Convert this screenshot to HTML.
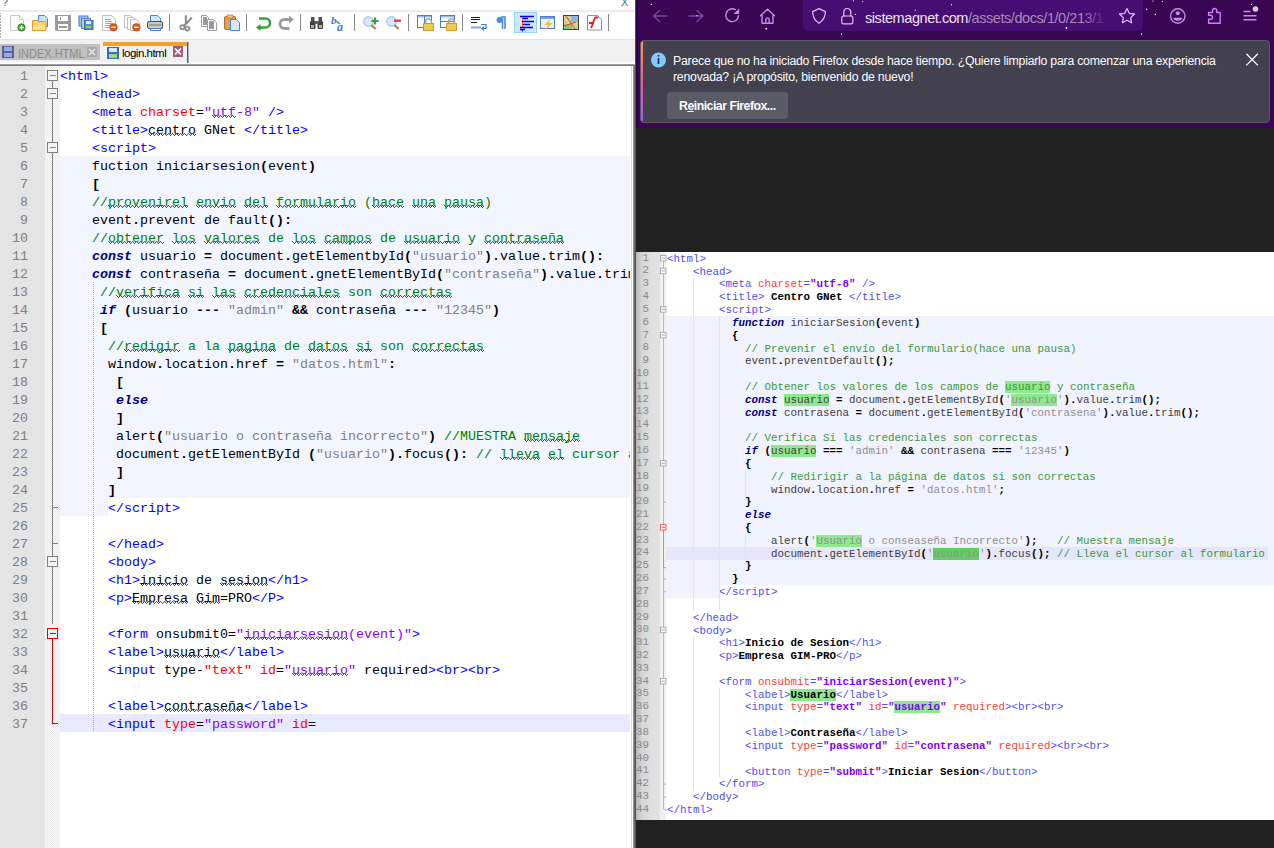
<!DOCTYPE html>
<html><head><meta charset="utf-8">
<style>
*{box-sizing:border-box}
html,body{margin:0;padding:0}
body{width:1274px;height:848px;overflow:hidden;position:relative;background:#fff;font-family:"Liberation Sans",sans-serif}
.abs{position:absolute}
/* left editor */
#npp{position:absolute;left:0;top:0;width:636px;height:848px;background:#fff;overflow:hidden}
#ed{position:absolute;left:0;top:66px;width:630px;height:782px;overflow:hidden}
#lnm{position:absolute;left:0;top:0;width:45px;height:100%;background:#e4e4e4}
#fm{position:absolute;left:45px;top:0;width:15px;height:100%;background:repeating-conic-gradient(#e8e8e8 0 25%,#fbfbfb 0 50%) 0 0/2px 2px}
.nn{position:absolute;left:0;margin-top:2px;width:28px;height:18px;line-height:18px;text-align:right;font:13.333px/18px "Liberation Mono",monospace;color:#808080}
#code{position:absolute;left:60px;top:0;width:570px;height:100%;overflow:hidden}
.ln{position:absolute;left:0;margin-top:2px;height:18px;line-height:18px;white-space:pre;font-family:"Liberation Mono",monospace;font-size:13.333px;color:#000}
.ln .t{color:#0000ff} .ln .a{color:#ff0000} .ln .v{color:#8000ff} .ln .k{color:#000080;font-weight:bold;font-style:italic}
.ln .s{color:#808080} .ln .c{color:#008000} .ln .o{font-weight:bold}
/* right code */
#img{position:absolute;left:0px;top:252px;width:638px;height:568px;background:#fff;overflow:hidden}
#rg{position:absolute;left:0;top:0;width:24px;height:100%;background:linear-gradient(90deg,#b8b8b8 0,#d6d6d6 6px,#e0e0e0 16px,#e2e2e2 24px)}
#rf{position:absolute;left:24px;top:0;width:6px;height:100%;background:#f0f0f0}
.rn{position:absolute;left:0;margin-top:-0.4px;width:13px;height:12.82px;line-height:12.82px;text-align:right;font-family:"Liberation Mono",monospace;font-size:10.833px;color:#8a8a8a;white-space:pre}
#rcode{position:absolute;left:31px;top:0;width:607px;height:100%}
.rl{position:absolute;left:0;margin-top:0.8px;height:12.82px;line-height:12.82px;white-space:pre;font-family:"Liberation Mono",monospace;font-size:10.833px;color:#404040}
.rl .t{color:#4d4df5} .rl .a{color:#ff3a3a} .rl .v{color:#8000ff;font-weight:bold} .rl .k{color:#000080;font-weight:bold;font-style:italic}
.rl .s{color:#909090} .rl .c{color:#3a9a3a} .rl .o{font-weight:bold;color:#000} .rl .x{font-weight:bold;color:#000}
.rl .g{background:#8ee88e} .rl .G{background:#60d060}
/* firefox */
#ff{position:absolute;left:636px;top:0;width:638px;height:848px;background:#212121}
#tb{position:absolute;left:0;top:0;width:638px;height:128px;background:#390653}
#note{position:absolute;left:4px;top:40px;width:630px;height:83px;background:#42414d;border:1px solid #5b5a64;border-radius:4px;overflow:hidden}
.ntxt{position:absolute;left:32px;color:#fbfbfe;font-size:12.3px;letter-spacing:-0.24px;white-space:nowrap}
</style></head><body>
<div id="npp">
  <div class="abs" style="left:0;top:10px;width:634px;height:2px;background:#ececec"></div><div class="abs" style="left:635px;top:0;width:1px;height:66px;background:#2e5a55"></div>
  <div class="abs" style="left:0;top:39px;width:635px;height:1px;background:#e3e3e3"></div>
  <div class="abs" style="left:0;top:40px;width:635px;height:22px;background:#f0f0f0"></div>
  <div class="abs" style="left:0;top:62px;width:635px;height:2px;background:#fff"></div><div class="abs" style="left:0;top:63.5px;width:635px;height:2.5px;background:linear-gradient(#b0b0b0,#6a6a6a)"></div>
  <svg class="abs" style="left:0;top:0" width="636" height="40">
<text x="2" y="6" font-family="Liberation Sans" font-size="11" fill="#4a4a90">?</text>
<text x="621" y="6" font-family="Liberation Sans" font-size="11" fill="#5a6aa0">X</text>
<rect x="0" y="13" width="1" height="25" fill="url(#tbgrip)"/>
<defs><pattern id="tbgrip" width="1" height="3" patternUnits="userSpaceOnUse"><rect width="1" height="2" fill="#b0b0b0"/></pattern></defs>
<!-- separators -->
<rect x="169" y="14" width="1" height="17" fill="#8a8a8a"/>
<rect x="246" y="14" width="1" height="17" fill="#8a8a8a"/>
<rect x="300" y="14" width="1" height="17" fill="#8a8a8a"/>
<rect x="354" y="14" width="1" height="17" fill="#8a8a8a"/>
<rect x="408" y="14" width="1" height="17" fill="#8a8a8a"/>
<rect x="462" y="14" width="1" height="17" fill="#8a8a8a"/>
<rect x="608" y="14" width="1" height="17" fill="#8a8a8a"/>
<!-- 1 new -->
<path d="M10.5 15.5h9l4 4v11h-13z" fill="#fdfdfd" stroke="#c8c8c8"/>
<path d="M19.5 15.5v4h4" fill="none" stroke="#c8c8c8"/>
<circle cx="21.5" cy="27.5" r="3.7" fill="#3f9a2e" stroke="#2a6e1e" stroke-width=".6"/>
<path d="M21.5 25.3v4.4M19.3 27.5h4.4" stroke="#fff" stroke-width="1.3"/>
<!-- 2 open -->
<path d="M38.5 15.5h6l3 3v8.5h-9z" fill="#cfe2fb" stroke="#4a86d8"/>
<path d="M32.5 20.5h5l1 1h7.5v9h-13.5z" fill="#f7d36a" stroke="#e89a2a"/>
<rect x="33" y="25" width="12" height="5" fill="#f9e08a"/>
<!-- 3 save grey -->
<path d="M55 15h16v16h-15l-1-1z" fill="#9a9a9a"/>
<rect x="58" y="16" width="10" height="5" fill="#fff"/><rect x="60" y="17" width="1" height="3" fill="#8a8a8a"/>
<rect x="58" y="24" width="10" height="6" fill="#fff"/><rect x="59" y="26" width="8" height="2" fill="#999"/>
<!-- 4 save all -->
<rect x="79" y="16" width="9" height="10" fill="#a8c4ee" stroke="#4a7ac8" stroke-width="1"/>
<rect x="81.5" y="18.5" width="9" height="10" fill="#b8d0f2" stroke="#4a7ac8"/>
<rect x="84.5" y="20.5" width="8.5" height="9" fill="#5b8fd8" stroke="#3a6ab8"/>
<rect x="86" y="21" width="5" height="3" fill="#eef4ff"/><rect x="86" y="26" width="5" height="2" fill="#8ad84a"/>
<!-- 5 close -->
<path d="M102.5 15.5h9l4 4v11h-13z" fill="#fdfdfd" stroke="#c0c0c0"/>
<path d="M105 19.5h6M105 21.5h7M105 23.5h7M105 25.5h5M105 27.5h4" stroke="#a8a8a8" stroke-width="1"/>
<circle cx="113.5" cy="27.3" r="3.8" fill="#e25a14" stroke="#b8400a" stroke-width=".6"/>
<rect x="111.3" y="26.6" width="4.4" height="1.4" fill="#fff"/>
<!-- 6 close all -->
<path d="M124.5 15.5h6l3 3v9h-9z" fill="#fdfdfd" stroke="#c0c0c0"/>
<path d="M127.5 17.5h6l3 3v9h-9z" fill="#fdfdfd" stroke="#c0c0c0"/>
<path d="M130.5 19.5h6l3 3v8h-9z" fill="#fdfdfd" stroke="#c0c0c0"/>
<circle cx="136.4" cy="27.3" r="3.8" fill="#e25a14" stroke="#b8400a" stroke-width=".6"/>
<rect x="134.2" y="26.6" width="4.4" height="1.4" fill="#fff"/>
<!-- 7 print -->
<path d="M150.5 15.5h7l3 3v4h-10z" fill="#d4e6fb" stroke="#4a86d8"/>
<rect x="147.5" y="21.5" width="15" height="7" rx="1.5" fill="#c8c8c8" stroke="#505050"/>
<rect x="149" y="24" width="12" height="2" fill="#a0a0a0"/>
<rect x="150.5" y="28.5" width="10" height="2" fill="#e6f0fc" stroke="#4a86d8"/>
<!-- 8 cut -->
<path d="M185.8 15.2V24.5M191.8 17.5L184.5 25.5" stroke="#8a8a8a" stroke-width="2" fill="none"/>
<circle cx="182.4" cy="27.2" r="2.1" fill="none" stroke="#8a8a8a" stroke-width="1.7"/>
<circle cx="187.4" cy="28.6" r="2.1" fill="none" stroke="#8a8a8a" stroke-width="1.7"/>
<!-- 9 copy -->
<path d="M201.5 15.5h5l2 2v9h-7z" fill="#fff" stroke="#9a9a9a"/><rect x="203" y="17" width="4" height="8" fill="#9a9a9a"/>
<path d="M207.5 19.5h6l3 3v8h-9z" fill="#fff" stroke="#9a9a9a"/><rect x="209" y="21" width="5" height="8" fill="#9a9a9a"/>
<!-- 10 paste -->
<rect x="224.5" y="16.5" width="11" height="13" rx="1" fill="#e0a050" stroke="#b07028"/>
<rect x="227" y="15" width="6" height="3" fill="#f0c070" stroke="#b07028" stroke-width=".6"/>
<path d="M230.5 19.5h6l3 3v8h-9z" fill="#d8e8fc" stroke="#4a86d8"/>
<!-- 11 undo -->
<path d="M259 18.5h6.5a4.5 4.5 0 0 1 0 9h-6" fill="none" stroke="#3aa03a" stroke-width="2.6"/>
<path d="M256 27.5l4.5-3.5v7z" fill="#3aa03a"/>
<!-- 12 redo -->
<path d="M291 19.5h-6.5a4.5 4.5 0 0 0 0 9h5" fill="none" stroke="#9a9a9a" stroke-width="2.8"/>
<path d="M294 19.5l-5 -4v8z" fill="#9a9a9a"/>
<!-- 13 find -->
<rect x="310" y="21" width="5.5" height="8" rx="1" fill="#404040"/><rect x="317.5" y="21" width="5.5" height="8" rx="1" fill="#404040"/>
<rect x="311" y="17" width="3.5" height="5" fill="#505050"/><rect x="318.5" y="17" width="3.5" height="5" fill="#505050"/>
<rect x="314.5" y="21" width="4" height="3" fill="#606060"/>
<rect x="311" y="25" width="3" height="3" fill="#b0b0b0"/><rect x="319" y="25" width="3" height="3" fill="#b0b0b0"/>
<!-- 14 replace -->
<text x="331" y="24" font-family="Liberation Serif" font-style="italic" font-weight="bold" font-size="11" fill="#3a7ad8">b</text>
<text x="337" y="31" font-family="Liberation Serif" font-style="italic" font-weight="bold" font-size="12" fill="#3a7ad8">a</text>
<path d="M336 21l4 3" stroke="#3a9a3a" stroke-width="1.5"/>
<!-- 15 zoom in -->
<circle cx="368.5" cy="21.5" r="4.8" fill="#d6e8fb" stroke="#8ab6e8" stroke-width="1"/>
<path d="M371.5 25l4 4" stroke="#b07a3a" stroke-width="2"/>
<path d="M375 17.5v7M371.5 21h7" stroke="#3a9a3a" stroke-width="2.2"/>
<!-- 16 zoom out -->
<circle cx="391.5" cy="21.5" r="4.8" fill="#d6e8fb" stroke="#8ab6e8" stroke-width="1"/>
<path d="M394.5 25l4 4" stroke="#b07a3a" stroke-width="2"/>
<rect x="394" y="19.5" width="7" height="2.4" fill="#e83a3a"/>
<!-- 17 sync v -->
<rect x="417.5" y="15.5" width="14" height="12" fill="#fff" stroke="#4a7ac8"/><rect x="418" y="16" width="13" height="1.5" fill="#9ab8e8"/>
<path d="M424.5 16v11" stroke="#4a7ac8"/>
<path d="M425.5 24v-2a3 3 0 0 1 6 0v2" fill="none" stroke="#a0a0a0" stroke-width="1.4"/>
<rect x="423.5" y="23.5" width="10" height="7" fill="#f0c850" stroke="#c89a30"/>
<!-- 18 sync h -->
<rect x="440.5" y="15.5" width="14" height="12" fill="#fff" stroke="#4a7ac8"/><rect x="441" y="16" width="13" height="1.5" fill="#9ab8e8"/>
<path d="M441 21.5h13" stroke="#4a7ac8"/>
<path d="M448.5 24v-2a3 3 0 0 1 6 0v2" fill="none" stroke="#a0a0a0" stroke-width="1.4"/>
<rect x="446.5" y="23.5" width="10" height="7" fill="#f0c850" stroke="#c89a30"/>
<!-- 19 wrap -->
<path d="M471 17.5h9M471 19.5h9M471 22.5h6" stroke="#202020" stroke-width="1"/>
<path d="M471 27.5h10" stroke="#7aa8e0" stroke-width="2"/>
<path d="M481 24.5h5v4h-4" fill="none" stroke="#3a7ad8" stroke-width="1.2"/>
<path d="M481 28.5l3-2.5v5z" fill="#3a7ad8"/>
<!-- 20 pilcrow -->
<path d="M500.5 17h4.5v12M502.5 17v12" stroke="#4a8ae0" stroke-width="1.6" fill="none"/>
<circle cx="499.5" cy="20" r="3" fill="#4a8ae0"/>
<!-- 21 indent guide selected -->
<rect x="514.5" y="12.5" width="22" height="20" fill="#cce8ff" stroke="#99d1ff"/>
<path d="M520 16.5h14M522 18.5h6M522 21.5h12M522 24.5h8M520 27.5h13M520 29.5h5" stroke="#0000e0" stroke-width="1.4"/>
<path d="M522.5 18v9" stroke="#e02020" stroke-width="1" stroke-dasharray="1 1"/>
<rect x="522" y="30" width="1" height="1.5" fill="#0000e0"/>
<!-- 22 launch -->
<rect x="540.5" y="16.5" width="14" height="12" fill="#eaf2fc" stroke="#4a7ac8"/><rect x="541" y="17" width="13" height="2" fill="#7aa0d8"/>
<path d="M550 19l-6 6h4l-3 5l8-7h-4z" fill="#f0c040"/>
<!-- 23 doc map -->
<rect x="563.5" y="15.5" width="15" height="14" fill="#d8d090" stroke="#404040"/>
<rect x="571" y="16" width="7" height="6" fill="#8ab8e8"/><rect x="564" y="24" width="8" height="5" fill="#8ac870"/>
<path d="M566 16l9 13M564 26l12 -4" stroke="#e04040" stroke-width="1"/>
<!-- 24 function list -->
<path d="M587.5 15.5h10l4 4v10.5h-14z" fill="#fff" stroke="#909090"/>
<path d="M591 28c2-3 2-7 4-10c1-1 2-1 3 0M589 23h5" fill="none" stroke="#e02020" stroke-width="1.8"/>
</svg>
  <div class="abs" style="left:0;top:44px;width:100px;height:16px;background:#c0c0c0"></div>
<svg class="abs" style="left:0;top:40px" width="200" height="24">
 <rect x="2" y="6" width="12" height="12" fill="#6a5a9a"/><rect x="4" y="7" width="8" height="4" fill="#8ab0e0"/><rect x="4" y="13" width="8" height="4" fill="#8ab0e0"/>
 <rect x="87" y="7" width="10" height="10" fill="#a8a8a8"/><path d="M89 9l6 6M95 9l-6 6" stroke="#e6e6e6" stroke-width="1.6"/>
 <rect x="103" y="2" width="84" height="4" fill="#f6a030"/>
 <rect x="187" y="2" width="1.4" height="21" fill="#555"/>
 <rect x="107" y="7" width="12" height="12" fill="#3a6ac8"/><rect x="109" y="8" width="8" height="4" fill="#dde8fa"/><rect x="109" y="14" width="8" height="4" fill="#9ad870"/>
 <rect x="173" y="6" width="10" height="11" fill="#a05a7a"/><path d="M175 8.5l6 6M181 8.5l-6 6" stroke="#fff" stroke-width="1.7"/>
</svg>
<div class="abs" style="left:17.5px;top:46px;font-size:12.5px;line-height:16px;color:#8c8c8c;white-space:nowrap;transform:scaleX(0.88);transform-origin:0 0">INDEX.HTML</div>
<div class="abs" style="left:122px;top:45px;font-size:11.5px;letter-spacing:-0.5px;line-height:16px;color:#000;white-space:nowrap">login.html</div>

  <div id="ed">
    <div id="lnm"><div class="nn" style="top:0px">1</div><div class="nn" style="top:18px">2</div><div class="nn" style="top:36px">3</div><div class="nn" style="top:54px">4</div><div class="nn" style="top:72px">5</div><div class="nn" style="top:90px">6</div><div class="nn" style="top:108px">7</div><div class="nn" style="top:126px">8</div><div class="nn" style="top:144px">9</div><div class="nn" style="top:162px">10</div><div class="nn" style="top:180px">11</div><div class="nn" style="top:198px">12</div><div class="nn" style="top:216px">13</div><div class="nn" style="top:234px">14</div><div class="nn" style="top:252px">15</div><div class="nn" style="top:270px">16</div><div class="nn" style="top:288px">17</div><div class="nn" style="top:306px">18</div><div class="nn" style="top:324px">19</div><div class="nn" style="top:342px">20</div><div class="nn" style="top:360px">21</div><div class="nn" style="top:378px">22</div><div class="nn" style="top:396px">23</div><div class="nn" style="top:414px">24</div><div class="nn" style="top:432px">25</div><div class="nn" style="top:450px">26</div><div class="nn" style="top:468px">27</div><div class="nn" style="top:486px">28</div><div class="nn" style="top:504px">29</div><div class="nn" style="top:522px">30</div><div class="nn" style="top:540px">31</div><div class="nn" style="top:558px">32</div><div class="nn" style="top:576px">33</div><div class="nn" style="top:594px">34</div><div class="nn" style="top:612px">35</div><div class="nn" style="top:630px">36</div><div class="nn" style="top:648px">37</div></div>
    <div id="fm"></div>
    <div class="abs" style="left:60px;top:90px;width:570px;height:342px;background:#f2f4fe"></div>
    <div class="abs" style="left:60px;top:432px;width:48px;height:18px;background:#f2f4fe"></div>
    <div class="abs" style="left:60px;top:648px;width:570px;height:18px;background:#e8e8ff"></div>
    <div id="code"><div class="ln" style="top:0px"><span class="t">&lt;html&gt;</span></div>
<div class="ln" style="top:18px">    <span class="t">&lt;head&gt;</span></div>
<div class="ln" style="top:36px">    <span class="t">&lt;meta</span> <span class="a">charset</span>=<span class="v">&quot;</span><span class="v q">utf</span><span class="v">-8&quot;</span><span class="t"> /&gt;</span></div>
<div class="ln" style="top:54px">    <span class="t">&lt;title&gt;</span><span class="q">centro</span> GNet <span class="t">&lt;/title&gt;</span></div>
<div class="ln" style="top:72px">    <span class="t">&lt;script&gt;</span></div>
<div class="ln" style="top:90px">    fuction iniciarsesion<span class="o">(</span>event<span class="o">)</span></div>
<div class="ln" style="top:108px">    <span class="o">[</span></div>
<div class="ln" style="top:126px">    <span class="c">//</span><span class="c q">provenirel</span><span class="c"> </span><span class="c q">envio</span><span class="c"> </span><span class="c q">del</span><span class="c"> </span><span class="c q">formulario</span><span class="c"> (</span><span class="c q">hace</span><span class="c"> </span><span class="c q">una</span><span class="c"> </span><span class="c q">pausa</span><span class="c">)</span></div>
<div class="ln" style="top:144px">    event<span class="o">.</span>prevent de fault<span class="o">():</span></div>
<div class="ln" style="top:162px">    <span class="c">//</span><span class="c q">obtener</span><span class="c"> </span><span class="c q">los</span><span class="c"> </span><span class="c q">valores</span><span class="c"> de </span><span class="c q">los</span><span class="c"> </span><span class="c q">campos</span><span class="c"> de </span><span class="c q">usuario</span><span class="c"> y </span><span class="c q">contraseña</span></div>
<div class="ln" style="top:180px">    <span class="k">const</span> usuario <span class="o">=</span> document<span class="o">.</span>getElementbyId<span class="o">(</span><span class="s">&quot;usuario&quot;</span><span class="o">).</span>value<span class="o">.</span>trim<span class="o">():</span></div>
<div class="ln" style="top:198px">    <span class="k">const</span> contraseña <span class="o">=</span> document<span class="o">.</span>gnetElementById<span class="o">(</span><span class="s">&quot;contraseña&quot;</span><span class="o">).</span>value<span class="o">.</span>trim<span class="o">():</span></div>
<div class="ln" style="top:216px">     <span class="c">//</span><span class="c q">verifica</span><span class="c"> </span><span class="c q">si</span><span class="c"> </span><span class="c q">las</span><span class="c"> </span><span class="c q">credenciales</span><span class="c"> son </span><span class="c q">correctas</span></div>
<div class="ln" style="top:234px">     <span class="k">if</span> <span class="o">(</span>usuario <span class="o">---</span> <span class="s">&quot;admin&quot;</span> <span class="o">&amp;&amp;</span> contraseña <span class="o">---</span> <span class="s">&quot;12345&quot;</span><span class="o">)</span></div>
<div class="ln" style="top:252px">     <span class="o">[</span></div>
<div class="ln" style="top:270px">      <span class="c">//</span><span class="c q">redigir</span><span class="c"> a la </span><span class="c q">pagina</span><span class="c"> de </span><span class="c q">datos</span><span class="c"> </span><span class="c q">si</span><span class="c"> son </span><span class="c q">correctas</span></div>
<div class="ln" style="top:288px">      window<span class="o">.</span>location<span class="o">.</span>href <span class="o">=</span> <span class="s">&quot;datos.html&quot;</span><span class="o">:</span></div>
<div class="ln" style="top:306px">       <span class="o">[</span></div>
<div class="ln" style="top:324px">       <span class="k">else</span></div>
<div class="ln" style="top:342px">       <span class="o">]</span></div>
<div class="ln" style="top:360px">       alert<span class="o">(</span><span class="s">&quot;usuario o contraseña incorrecto&quot;</span><span class="o">)</span> <span class="c">//MUESTRA </span><span class="c q">mensaje</span></div>
<div class="ln" style="top:378px">       document<span class="o">.</span>getElementById <span class="o">(</span><span class="s">&quot;usuario&quot;</span><span class="o">).</span>focus<span class="o">():</span> <span class="c">// </span><span class="c q">lleva</span><span class="c"> </span><span class="c q">el</span><span class="c"> cursor al formulario</span></div>
<div class="ln" style="top:396px">       <span class="o">]</span></div>
<div class="ln" style="top:414px">      <span class="o">]</span></div>
<div class="ln" style="top:432px">      <span class="t">&lt;/script&gt;</span></div>
<div class="ln" style="top:450px"></div>
<div class="ln" style="top:468px">      <span class="t">&lt;/head&gt;</span></div>
<div class="ln" style="top:486px">      <span class="t">&lt;body&gt;</span></div>
<div class="ln" style="top:504px">      <span class="t">&lt;h1&gt;</span><span class="q">inicio</span> de <span class="q">sesion</span><span class="t">&lt;/h1&gt;</span></div>
<div class="ln" style="top:522px">      <span class="t">&lt;p&gt;</span><span class="q">Empresa</span> <span class="q">Gim</span>=PRO<span class="t">&lt;/P&gt;</span></div>
<div class="ln" style="top:540px"></div>
<div class="ln" style="top:558px">      <span class="t">&lt;form</span> onsubmit0=<span class="v">&quot;</span><span class="v q">iniciarsesion</span><span class="v">(event)&quot;</span><span class="t">&gt;</span></div>
<div class="ln" style="top:576px">      <span class="t">&lt;label&gt;</span><span class="q">usuario</span><span class="t">&lt;/label&gt;</span></div>
<div class="ln" style="top:594px">      <span class="t">&lt;input</span> type-<span class="a">&quot;text&quot;</span> <span class="a">id</span>=<span class="v">&quot;</span><span class="v q">usuario</span><span class="v">&quot;</span> required<span class="t">&gt;&lt;br&gt;&lt;br&gt;</span></div>
<div class="ln" style="top:612px"></div>
<div class="ln" style="top:630px">      <span class="t">&lt;label&gt;</span><span class="q">contraseña</span><span class="t">&lt;/label&gt;</span></div>
<div class="ln" style="top:648px">      <span class="t">&lt;input</span> <span class="a">type</span>=<span class="v">&quot;password&quot;</span> <span class="a">id</span>=</div>
</div>
  </div>
  <svg class="abs" style="left:0;top:0" width="636" height="848">
    <defs>
      <pattern id="zz" x="0" y="1" width="4" height="3" patternUnits="userSpaceOnUse">
        <rect x="0" y="0" width="1" height="1" fill="#ff0000"/><rect x="1" y="1" width="1" height="1" fill="#ff0000"/>
        <rect x="2" y="2" width="1" height="1" fill="#ff0000"/><rect x="3" y="1" width="1" height="1" fill="#ff0000"/>
      </pattern>
      <pattern id="dots" x="0" y="0" width="1" height="2" patternUnits="userSpaceOnUse"><rect x="0" y="0" width="1" height="1" fill="#a8a8a8"/></pattern>
    </defs>
    <rect x="52" y="80" width="1" height="544" fill="#808080"/><rect x="47.5" y="70.5" width="10" height="10" fill="#f4f4f4" stroke="#808080"/><rect x="50" y="75" width="6" height="1" fill="#808080"/><rect x="47.5" y="88.5" width="10" height="10" fill="#f4f4f4" stroke="#808080"/><rect x="50" y="93" width="6" height="1" fill="#808080"/><rect x="47.5" y="142.5" width="10" height="10" fill="#f4f4f4" stroke="#808080"/><rect x="50" y="147" width="6" height="1" fill="#808080"/><rect x="47.5" y="556.5" width="10" height="10" fill="#f4f4f4" stroke="#808080"/><rect x="50" y="561" width="6" height="1" fill="#808080"/><rect x="53" y="507" width="5" height="1" fill="#808080"/><rect x="53" y="543" width="5" height="1" fill="#808080"/><rect x="52" y="638" width="1" height="86" fill="#e00000"/><rect x="52" y="723" width="6" height="1" fill="#e00000"/><rect x="47.5" y="628.5" width="10" height="10" fill="#fff4f4" stroke="#e00000"/><rect x="50" y="633" width="6" height="1" fill="#e00000"/><rect x="93" y="282" width="1" height="450" fill="url(#dots)"/><rect x="212" y="115" width="24" height="3" fill="url(#zz)"/><rect x="148" y="133" width="48" height="3" fill="url(#zz)"/><rect x="108" y="205" width="80" height="3" fill="url(#zz)"/><rect x="196" y="205" width="40" height="3" fill="url(#zz)"/><rect x="244" y="205" width="24" height="3" fill="url(#zz)"/><rect x="276" y="205" width="80" height="3" fill="url(#zz)"/><rect x="372" y="205" width="32" height="3" fill="url(#zz)"/><rect x="412" y="205" width="24" height="3" fill="url(#zz)"/><rect x="444" y="205" width="40" height="3" fill="url(#zz)"/><rect x="108" y="241" width="56" height="3" fill="url(#zz)"/><rect x="172" y="241" width="24" height="3" fill="url(#zz)"/><rect x="204" y="241" width="56" height="3" fill="url(#zz)"/><rect x="292" y="241" width="24" height="3" fill="url(#zz)"/><rect x="324" y="241" width="48" height="3" fill="url(#zz)"/><rect x="404" y="241" width="56" height="3" fill="url(#zz)"/><rect x="484" y="241" width="80" height="3" fill="url(#zz)"/><rect x="116" y="295" width="64" height="3" fill="url(#zz)"/><rect x="188" y="295" width="16" height="3" fill="url(#zz)"/><rect x="212" y="295" width="24" height="3" fill="url(#zz)"/><rect x="244" y="295" width="96" height="3" fill="url(#zz)"/><rect x="380" y="295" width="72" height="3" fill="url(#zz)"/><rect x="124" y="349" width="56" height="3" fill="url(#zz)"/><rect x="228" y="349" width="48" height="3" fill="url(#zz)"/><rect x="308" y="349" width="40" height="3" fill="url(#zz)"/><rect x="356" y="349" width="16" height="3" fill="url(#zz)"/><rect x="412" y="349" width="72" height="3" fill="url(#zz)"/><rect x="524" y="439" width="56" height="3" fill="url(#zz)"/><rect x="500" y="457" width="40" height="3" fill="url(#zz)"/><rect x="548" y="457" width="16" height="3" fill="url(#zz)"/><rect x="140" y="583" width="48" height="3" fill="url(#zz)"/><rect x="220" y="583" width="48" height="3" fill="url(#zz)"/><rect x="132" y="601" width="56" height="3" fill="url(#zz)"/><rect x="196" y="601" width="24" height="3" fill="url(#zz)"/><rect x="244" y="637" width="104" height="3" fill="url(#zz)"/><rect x="164" y="655" width="56" height="3" fill="url(#zz)"/><rect x="292" y="673" width="56" height="3" fill="url(#zz)"/><rect x="164" y="709" width="80" height="3" fill="url(#zz)"/>
  </svg>
  <div class="abs" style="left:630px;top:66px;width:1px;height:782px;background:#fff"></div>
  <div class="abs" style="left:631px;top:66px;width:1px;height:782px;background:#d9d9d9"></div>
  <div class="abs" style="left:632px;top:66px;width:1px;height:782px;background:#fff"></div>
  <div class="abs" style="left:633px;top:66px;width:3px;height:782px;background:linear-gradient(90deg,#a8a8a8,#6a6a6a,#34504a)"></div>
</div>
<div id="ff">
  <div id="tb">
    <div class="abs" style="left:0;top:0;width:2px;height:128px;background:#2e0446"></div><div class="abs" style="left:167px;top:0;width:340px;height:31px;background:#460e72;border-radius:0 0 5px 5px"></div>
<svg class="abs" style="left:0;top:0" width="638" height="40">
 <g fill="none" stroke-width="1.5" stroke-linecap="round" stroke-linejoin="round">
  <path d="M17.5 16h13.5M23.5 10.5l-6 5.5 6 5.5" stroke="#7a48a2" stroke-width="1.4"/>
  <path d="M53 16h13.5M61 10.5l6 5.5-6 5.5" stroke="#7a48a2" stroke-width="1.4"/>
  <path d="M99.3 9.6A6.4 6.4 0 1 0 102.6 15.6" stroke="#c98af0" stroke-width="1.4"/>
  <path d="M103.2 8.4V14H97.6z" fill="#c98af0" stroke="none"/>
  <path d="M124.5 15.8L131.5 9.2L138.5 15.8M126 14.5V23.3H137V14.5M129.8 23V19.6a1.7 1.7 0 0 1 3.4 0V23" stroke="#c98af0" stroke-width="1.4"/>
  <path d="M183 8.6L176.6 11.6Q176.6 19.2 183 23.3Q189.4 19.2 189.4 11.6Z" stroke="#e6c0f0" stroke-width="1.2"/>
  <rect x="205.8" y="16" width="11" height="7.8" rx="1.6" stroke="#e6c0f0" stroke-width="1.2"/>
  <path d="M207.8 16V12a3.5 3.5 0 0 1 7 0V16" stroke="#e6c0f0" stroke-width="1.2"/>
  <path d="M491 8.5l2.3 4.8 5.2.7-3.8 3.6.9 5.2-4.6-2.5-4.6 2.5.9-5.2-3.8-3.6 5.2-.7z" stroke="#e0b8f0" stroke-width="1.3"/>
  <circle cx="541.8" cy="16" r="7.2" stroke="#c98af0" stroke-width="1.4"/>
  <circle cx="541.8" cy="13.3" r="2" stroke="none" fill="#c98af0"/>
  <path d="M537.3 17.8H546.3Q546 20.7 541.8 20.7Q537.6 20.7 537.3 17.8Z" fill="#c98af0" stroke="none"/>
  <path d="M572.6 12.5H576.5V10.6a2.1 2.1 0 0 1 4.2 0V12.5H584.2V23.2H572.6V19.3H574.5a2 2 0 0 0 0-4H572.6Z" stroke="#cf80f6" stroke-width="1.4"/>
  <path d="M608 11.5h6M608 15.7h12M608 19.7h12" stroke="#c98af0" stroke-width="1.4"/>
 </g>
 <circle cx="619.5" cy="9" r="2.8" fill="#cfcfcf"/>
 <g fill="#fff"><circle cx="15.4" cy="4.4" r="0.7"/><circle cx="61" cy="15.7" r="0.6"/><circle cx="130.3" cy="28.7" r="0.9"/><circle cx="217.4" cy="0.8" r="0.6"/><circle cx="226.6" cy="1.5" r="0.6"/><circle cx="219.3" cy="14.3" r="0.6"/><circle cx="279.2" cy="10.2" r="0.6"/><circle cx="315.5" cy="4.7" r="0.6"/><circle cx="205.5" cy="34" r="0.7"/><circle cx="430.5" cy="28" r="0.9"/><circle cx="510.7" cy="9.3" r="0.7"/><circle cx="519.4" cy="14.5" r="0.7"/><circle cx="517" cy="1" r="0.6"/><circle cx="526.5" cy="1.5" r="0.6"/><circle cx="505.6" cy="34" r="0.7"/><circle cx="615.5" cy="4.4" r="0.6"/></g>
</svg>
<div class="abs" style="left:229px;top:9px;font-size:14.5px;letter-spacing:-0.44px;line-height:19px;color:#f0e0f8;white-space:nowrap;width:247px;overflow:hidden">sistemagnet.com<span style="color:#a68ab8">/assets/docs/1/0/213/1</span></div>
<div class="abs" style="left:446px;top:5px;width:32px;height:22px;background:linear-gradient(90deg,rgba(70,14,114,0),#460e72 80%)"></div>

    <div id="note">
      <div class="abs" style="left:0;top:0;width:2px;height:100%;background:linear-gradient(#ffa040,#ff4aa8 50%,#9b5cff)"></div>
<svg class="abs" style="left:1px;top:0" width="629" height="83">
 <circle cx="16.5" cy="19" r="7.5" fill="#80c8ff"/>
 <rect x="15.7" y="17" width="1.6" height="6" fill="#2a2a3a"/><rect x="15.7" y="14" width="1.6" height="1.6" fill="#2a2a3a"/>
 <path d="M604.3 12.8l11.6 11.6M615.9 12.8l-11.6 11.6" stroke="#fbfbfe" stroke-width="1.3"/>
</svg>
<div class="ntxt" style="top:12px;line-height:17px">Parece que no ha iniciado Firefox desde hace tiempo. ¿Quiere limpiarlo para comenzar una experiencia</div>
<div class="ntxt" style="top:28px;line-height:17px">renovada? ¡A propósito, bienvenido de nuevo!</div>
<div class="abs" style="left:26px;top:51px;width:121px;height:27px;background:#5b5b66;border-radius:4px"></div>
<div class="abs" style="left:38px;top:57px;font-size:12.3px;letter-spacing:-0.5px;line-height:17px;font-weight:bold;color:#fbfbfe;white-space:nowrap">R<u>e</u>iniciar Firefox...</div>

    </div>
  </div>
  <div id="img">
    <div id="rg"><div class="rn" style="top:0.00px">1</div><div class="rn" style="top:12.82px">2</div><div class="rn" style="top:25.64px">3</div><div class="rn" style="top:38.46px">4</div><div class="rn" style="top:51.28px">5</div><div class="rn" style="top:64.10px">6</div><div class="rn" style="top:76.92px">7</div><div class="rn" style="top:89.74px">8</div><div class="rn" style="top:102.56px">9</div><div class="rn" style="top:115.38px">10</div><div class="rn" style="top:128.20px">11</div><div class="rn" style="top:141.02px">12</div><div class="rn" style="top:153.84px">13</div><div class="rn" style="top:166.66px">14</div><div class="rn" style="top:179.48px">15</div><div class="rn" style="top:192.30px">16</div><div class="rn" style="top:205.12px">17</div><div class="rn" style="top:217.94px">18</div><div class="rn" style="top:230.76px">19</div><div class="rn" style="top:243.58px">20</div><div class="rn" style="top:256.40px">21</div><div class="rn" style="top:269.22px">22</div><div class="rn" style="top:282.04px">23</div><div class="rn" style="top:294.86px">24</div><div class="rn" style="top:307.68px">25</div><div class="rn" style="top:320.50px">26</div><div class="rn" style="top:333.32px">27</div><div class="rn" style="top:346.14px">28</div><div class="rn" style="top:358.96px">29</div><div class="rn" style="top:371.78px">30</div><div class="rn" style="top:384.60px">31</div><div class="rn" style="top:397.42px">32</div><div class="rn" style="top:410.24px">33</div><div class="rn" style="top:423.06px">34</div><div class="rn" style="top:435.88px">35</div><div class="rn" style="top:448.70px">36</div><div class="rn" style="top:461.52px">37</div><div class="rn" style="top:474.34px">38</div><div class="rn" style="top:487.16px">39</div><div class="rn" style="top:499.98px">40</div><div class="rn" style="top:512.80px">41</div><div class="rn" style="top:525.62px">42</div><div class="rn" style="top:538.44px">43</div><div class="rn" style="top:551.26px">44</div></div>
    <div id="rf"></div>
    <div class="abs" style="left:30px;top:64.10px;width:608px;height:269.22px;background:#f0f2fd"></div>
    <div class="abs" style="left:30px;top:333.32px;width:53px;height:12.82px;background:#f0f2fd"></div>
    <div class="abs" style="left:30px;top:294.86px;width:602px;height:12.82px;background:#e6e6fa"></div>
    <svg class="abs" style="left:0;top:0;z-index:1" width="638" height="568"><rect x="27" y="9.00" width="1" height="548.26" fill="#bcbcbc"/><rect x="24.5" y="3.40" width="5.5" height="5.5" fill="#fafafa" stroke="#acacac" stroke-width="1"/><rect x="25.5" y="5.60" width="3.5" height="1" fill="#acacac"/><rect x="24.5" y="16.22" width="5.5" height="5.5" fill="#fafafa" stroke="#acacac" stroke-width="1"/><rect x="25.5" y="18.42" width="3.5" height="1" fill="#acacac"/><rect x="24.5" y="54.68" width="5.5" height="5.5" fill="#fafafa" stroke="#acacac" stroke-width="1"/><rect x="25.5" y="56.88" width="3.5" height="1" fill="#acacac"/><rect x="24.5" y="80.32" width="5.5" height="5.5" fill="#fafafa" stroke="#acacac" stroke-width="1"/><rect x="25.5" y="82.52" width="3.5" height="1" fill="#acacac"/><rect x="24.5" y="208.52" width="5.5" height="5.5" fill="#fafafa" stroke="#acacac" stroke-width="1"/><rect x="25.5" y="210.72" width="3.5" height="1" fill="#acacac"/><rect x="24.5" y="375.18" width="5.5" height="5.5" fill="#fafafa" stroke="#acacac" stroke-width="1"/><rect x="25.5" y="377.38" width="3.5" height="1" fill="#acacac"/><rect x="24.5" y="426.46" width="5.5" height="5.5" fill="#fafafa" stroke="#acacac" stroke-width="1"/><rect x="25.5" y="428.66" width="3.5" height="1" fill="#acacac"/><rect x="28" y="249.58" width="2" height="1" fill="#b0b0b0"/><rect x="28" y="326.50" width="2" height="1" fill="#b0b0b0"/><rect x="28" y="339.32" width="2" height="1" fill="#b0b0b0"/><rect x="28" y="531.62" width="2" height="1" fill="#b0b0b0"/><rect x="28" y="544.44" width="2" height="1" fill="#b0b0b0"/><rect x="28" y="557.26" width="3" height="1" fill="#b0b0b0"/><rect x="27" y="278.22" width="1" height="37.46" fill="#f08080"/><rect x="28" y="315.18" width="2" height="1" fill="#f08080"/><rect x="24.5" y="272.62" width="5.5" height="5.5" fill="#fafafa" stroke="#f06060" stroke-width="1"/><rect x="25.5" y="274.82" width="3.5" height="1" fill="#f06060"/><rect x="57.0" y="25.64" width="1" height="333.32" fill="#e4e4e4"/><rect x="83.0" y="64.10" width="1" height="294.86" fill="#e4e4e4"/><rect x="109.0" y="217.94" width="1" height="25.64" fill="#e4e4e4"/><rect x="109.0" y="282.04" width="1" height="25.64" fill="#e4e4e4"/><rect x="57.0" y="384.60" width="1" height="153.84" fill="#e4e4e4"/><rect x="83.0" y="435.88" width="1" height="89.74" fill="#e4e4e4"/></svg>
    <div id="rcode"><div class="rl" style="top:0.00px"><span class="t">&lt;html&gt;</span></div>
<div class="rl" style="top:12.82px">    <span class="t">&lt;head&gt;</span></div>
<div class="rl" style="top:25.64px">        <span class="t">&lt;meta</span> <span class="a">charset</span><span class="t">=</span><span class="v">&quot;utf-8&quot;</span> <span class="t">/&gt;</span></div>
<div class="rl" style="top:38.46px">        <span class="t">&lt;title&gt;</span> <span class="x">Centro GNet</span> <span class="t">&lt;/title&gt;</span></div>
<div class="rl" style="top:51.28px">        <span class="t">&lt;script&gt;</span></div>
<div class="rl" style="top:64.10px">          <span class="k">function</span> iniciarSesion<span class="o">(</span>event<span class="o">)</span></div>
<div class="rl" style="top:76.92px">          <span class="o">{</span></div>
<div class="rl" style="top:89.74px">            <span class="c">// Prevenir el envío del formulario(hace una pausa)</span></div>
<div class="rl" style="top:102.56px">            event<span class="o">.</span>preventDefault<span class="o">();</span></div>
<div class="rl" style="top:115.38px"></div>
<div class="rl" style="top:128.20px">            <span class="c">// Obtener los valores de los campos de </span><span class="c g">usuario</span><span class="c"> y contraseña</span></div>
<div class="rl" style="top:141.02px">            <span class="k">const</span> <span class="g">usuario</span> <span class="o">=</span> document<span class="o">.</span>getElementById<span class="o">(</span><span class="s">&#x27;</span><span class="s g">usuario</span><span class="s">&#x27;</span><span class="o">).</span>value<span class="o">.</span>trim<span class="o">();</span></div>
<div class="rl" style="top:153.84px">            <span class="k">const</span> contrasena <span class="o">=</span> document<span class="o">.</span>getElementById<span class="o">(</span><span class="s">&#x27;contrasena&#x27;</span><span class="o">).</span>value<span class="o">.</span>trim<span class="o">();</span></div>
<div class="rl" style="top:166.66px"></div>
<div class="rl" style="top:179.48px">            <span class="c">// Verifica Si las credenciales son correctas</span></div>
<div class="rl" style="top:192.30px">            <span class="k">if</span> <span class="o">(</span><span class="g">usuario</span> <span class="o">===</span> <span class="s">&#x27;admin&#x27;</span> <span class="o">&amp;&amp;</span> contrasena <span class="o">===</span> <span class="s">&#x27;12345&#x27;</span><span class="o">)</span></div>
<div class="rl" style="top:205.12px">            <span class="o">{</span></div>
<div class="rl" style="top:217.94px">                <span class="c">// Redirigir a la página de datos si son correctas</span></div>
<div class="rl" style="top:230.76px">                window<span class="o">.</span>location<span class="o">.</span>href <span class="o">=</span> <span class="s">&#x27;datos.html&#x27;</span><span class="o">;</span></div>
<div class="rl" style="top:243.58px">            <span class="o">}</span></div>
<div class="rl" style="top:256.40px">            <span class="k">else</span></div>
<div class="rl" style="top:269.22px">            <span class="o">{</span></div>
<div class="rl" style="top:282.04px">                alert<span class="o">(</span><span class="s">&#x27;</span><span class="s g">Usuario</span><span class="s"> o conseaseña Incorrecto&#x27;</span><span class="o">);</span>   <span class="c">// Muestra mensaje</span></div>
<div class="rl" style="top:294.86px">                document<span class="o">.</span>getElementById<span class="o">(</span><span class="s">&#x27;</span><span class="s G">usuario</span><span class="s">&#x27;</span><span class="o">).</span>focus<span class="o">();</span> <span class="c">// Lleva el cursor al formulario</span></div>
<div class="rl" style="top:307.68px">            <span class="o">}</span></div>
<div class="rl" style="top:320.50px">          <span class="o">}</span></div>
<div class="rl" style="top:333.32px">        <span class="t">&lt;/script&gt;</span></div>
<div class="rl" style="top:346.14px"></div>
<div class="rl" style="top:358.96px">    <span class="t">&lt;/head&gt;</span></div>
<div class="rl" style="top:371.78px">    <span class="t">&lt;body&gt;</span></div>
<div class="rl" style="top:384.60px">        <span class="t">&lt;h1&gt;</span><span class="x">Inicio de Sesion</span><span class="t">&lt;/h1&gt;</span></div>
<div class="rl" style="top:397.42px">        <span class="t">&lt;p&gt;</span><span class="x">Empresa GIM-PRO</span><span class="t">&lt;/p&gt;</span></div>
<div class="rl" style="top:410.24px"></div>
<div class="rl" style="top:423.06px">        <span class="t">&lt;form</span> <span class="a">onsubmit</span><span class="t">=</span><span class="v">&quot;iniciarSesion(event)&quot;</span><span class="t">&gt;</span></div>
<div class="rl" style="top:435.88px">            <span class="t">&lt;label&gt;</span><span class="x g">Usuario</span><span class="t">&lt;/label&gt;</span></div>
<div class="rl" style="top:448.70px">            <span class="t">&lt;input</span> <span class="a">type</span><span class="t">=</span><span class="v">&quot;text&quot;</span> <span class="a">id</span><span class="t">=</span><span class="v">&quot;</span><span class="v g">usuario</span><span class="v">&quot;</span> <span class="a">required</span><span class="t">&gt;&lt;br&gt;&lt;br&gt;</span></div>
<div class="rl" style="top:461.52px"></div>
<div class="rl" style="top:474.34px">            <span class="t">&lt;label&gt;</span><span class="x">Contraseña</span><span class="t">&lt;/label&gt;</span></div>
<div class="rl" style="top:487.16px">            <span class="t">&lt;input</span> <span class="a">type</span><span class="t">=</span><span class="v">&quot;password&quot;</span> <span class="a">id</span><span class="t">=</span><span class="v">&quot;contrasena&quot;</span> <span class="a">required</span><span class="t">&gt;&lt;br&gt;&lt;br&gt;</span></div>
<div class="rl" style="top:499.98px"></div>
<div class="rl" style="top:512.80px">            <span class="t">&lt;button</span> <span class="a">type</span><span class="t">=</span><span class="v">&quot;submit&quot;</span><span class="t">&gt;</span><span class="x">Iniciar Sesion</span><span class="t">&lt;/button&gt;</span></div>
<div class="rl" style="top:525.62px">        <span class="t">&lt;/form&gt;</span></div>
<div class="rl" style="top:538.44px">    <span class="t">&lt;/body&gt;</span></div>
<div class="rl" style="top:551.26px"><span class="t">&lt;/html&gt;</span></div>
</div>
  </div>
</div>
</body></html>
